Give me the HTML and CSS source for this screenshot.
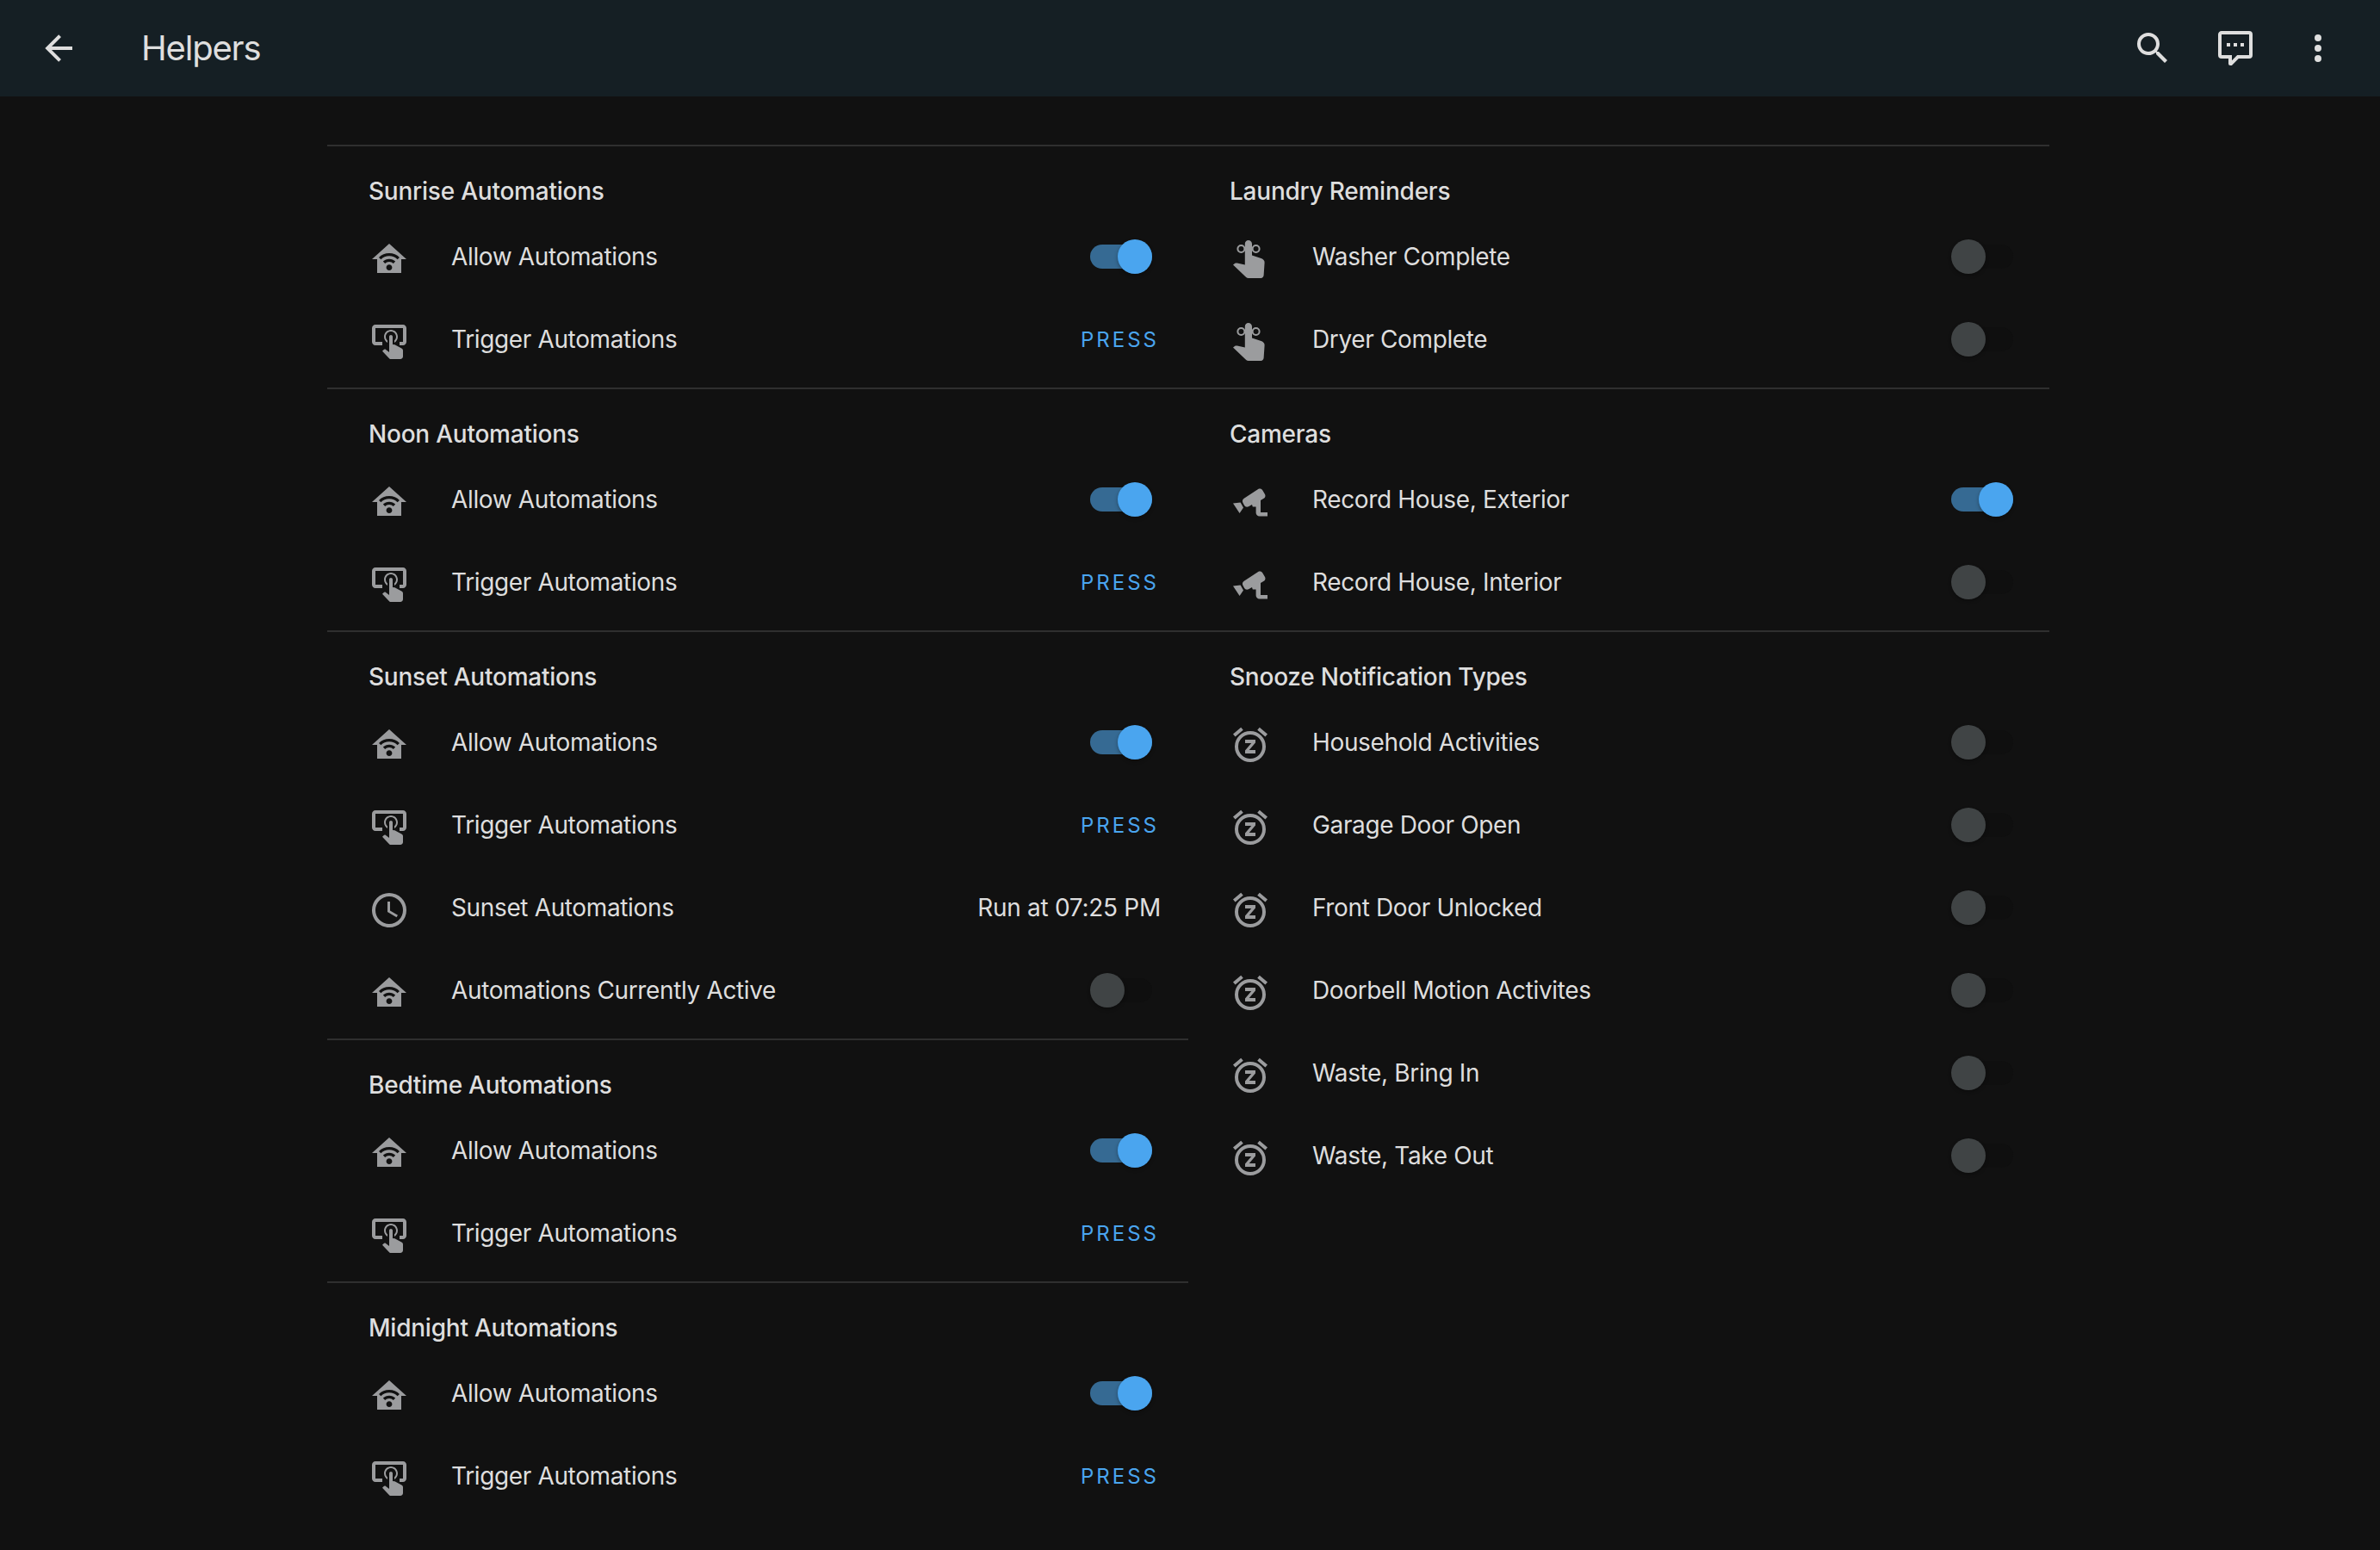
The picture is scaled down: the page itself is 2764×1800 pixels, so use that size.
FILE: index.html
```html
<!DOCTYPE html>
<html lang="en">
<head>
    <meta charset="UTF-8">
    <title>Helpers</title>
    <link rel="stylesheet" href="styles.css">
</head>
<body>
    <!-- Icon sprite -->
    <svg class="sprite" xmlns="http://www.w3.org/2000/svg">
        <symbol id="i-back" viewBox="0 0 24 24"><path d="M20,11V13H8L13.5,18.5L12.08,19.92L4.16,12L12.08,4.08L13.5,5.5L8,11H20Z"/></symbol>
        <symbol id="i-search" viewBox="0 0 24 24"><path d="M9.5,3A6.5,6.5 0 0,1 16,9.5C16,11.11 15.41,12.59 14.44,13.73L14.71,14H15.5L20.5,19L19,20.5L14,15.5V14.71L13.73,14.44C12.59,15.41 11.11,16 9.5,16A6.5,6.5 0 0,1 3,9.5A6.5,6.5 0 0,1 9.5,3M9.5,5C7,5 5,7 5,9.5C5,12 7,14 9.5,14C12,14 14,12 14,9.5C14,7 12,5 9.5,5Z"/></symbol>
        <symbol id="i-comment" viewBox="0 0 24 24"><path d="M9,22A1,1 0 0,1 8,21V18H4A2,2 0 0,1 2,16V4C2,2.89 2.9,2 4,2H20A2,2 0 0,1 22,4V16A2,2 0 0,1 20,18H13.9L10.2,21.71C10,21.9 9.75,22 9.5,22V22H9M10,16V19.08L13.08,16H20V4H4V16H10M17,11H15V9H17V11M13,11H11V9H13V11M9,11H7V9H9V11Z"/></symbol>
        <symbol id="i-dots" viewBox="0 0 24 24"><path d="M12,16A2,2 0 0,1 14,18A2,2 0 0,1 12,20A2,2 0 0,1 10,18A2,2 0 0,1 12,16M12,10A2,2 0 0,1 14,12A2,2 0 0,1 12,14A2,2 0 0,1 10,12A2,2 0 0,1 12,10M12,4A2,2 0 0,1 14,6A2,2 0 0,1 12,8A2,2 0 0,1 10,6A2,2 0 0,1 12,4Z"/></symbol>
        <symbol id="i-home" viewBox="0 0 24 24"><path fill-rule="evenodd" d="M12,3L2,12H5V20H19V12H22L12,3M12,8.5C14.34,8.5 16.46,9.43 18,10.94L16.8,12.12C15.58,10.91 13.88,10.17 12,10.17C10.12,10.17 8.42,10.91 7.2,12.12L6,10.94C7.54,9.43 9.66,8.5 12,8.5M12,11.83C13.4,11.83 14.67,12.39 15.6,13.3L14.4,14.47C13.79,13.87 12.94,13.5 12,13.5C11.06,13.5 10.21,13.87 9.6,14.47L8.4,13.3C9.33,12.39 10.6,11.83 12,11.83M12,15.17C12.94,15.17 13.7,15.91 13.7,16.83C13.7,17.75 12.94,18.5 12,18.5C11.06,18.5 10.3,17.75 10.3,16.83C10.3,15.91 11.06,15.17 12,15.17Z"/></symbol>
        <symbol id="i-tap" viewBox="0 0 24 24"><path d="M13 5C15.21 5 17 6.79 17 9C17 10.5 16.2 11.77 15 12.46V11.24C15.61 10.69 16 9.89 16 9C16 7.34 14.66 6 13 6S10 7.34 10 9C10 9.89 10.39 10.69 11 11.24V12.46C9.8 11.77 9 10.5 9 9C9 6.79 10.79 5 13 5M20 20.5C19.97 21.32 19.32 21.97 18.5 22H13C12.62 22 12.26 21.85 12 21.57L8 17.37L8.74 16.6C8.93 16.39 9.2 16.28 9.5 16.28H9.7L12 18V9C12 8.45 12.45 8 13 8S14 8.45 14 9V13.47L15.21 13.6L19.15 15.79C19.68 16.03 20 16.56 20 17.14V20.5M20 2H4C2.9 2 2 2.9 2 4V12C2 13.11 2.9 14 4 14H8V12H4V4H20V12H18V14H20C21.1 14 22 13.1 22 12V4C22 2.9 21.11 2 20 2Z"/></symbol>
        <symbol id="i-hold" viewBox="0 0 24 24"><path d="M8.9 3.1C8.9 1.9 9.8 1 10.9 1S13 1.9 13 3.1V9.8L18.3 11.5C19.5 11.9 20.4 12.8 20.3 14L19.8 21.4C19.7 22.4 19 23 18.2 23H10.9C10.4 23 10 22.8 9.6 22.5L2 15.2L3 14.5C3.4 14.2 3.9 14.2 4.4 14.3L8.9 15.2Z"/><circle cx="6.7" cy="6" r="2" fill="none" stroke="currentColor" stroke-width="1"/><circle cx="15.3" cy="6" r="2" fill="none" stroke="currentColor" stroke-width="1"/></symbol>
        <symbol id="i-cctv" viewBox="0 0 24 24"><path d="M16.6 4.5C17.5 4 18.6 4.3 19.1 5.1L20.5 7.5C21 8.4 20.7 9.4 19.9 9.9L18 11V18H22V20.2H17.3C16.2 20.2 15.3 19.3 15.3 18.2V14.8H13.4L13 13.5L11 14.6C10.1 15.1 9 14.8 8.5 13.9L7.7 12.4C7.2 11.5 7.5 10.4 8.4 9.9ZM2 12.7L6.3 12.2L8 15.2L5.8 18.5Z"/></symbol>
        <symbol id="i-snooze" viewBox="0 0 24 24"><path fill-rule="evenodd" d="M7.88,3.39L6.6,1.86L2,5.71L3.29,7.24L7.88,3.39M22,5.72L17.4,1.86L16.11,3.39L20.71,7.25L22,5.72M12,4A9,9 0 0,0 3,13A9,9 0 0,0 12,22C17,22 21,18 21,13A9,9 0 0,0 12,4M12,20A7,7 0 0,1 5,13A7,7 0 0,1 12,6A7,7 0 0,1 19,13A7,7 0 0,1 12,20M9,11H12.63L9,15.2V17H15V15H11.37L15,10.8V9H9V11Z"/></symbol>
        <symbol id="i-clock" viewBox="0 0 24 24"><path d="M12,20A8,8 0 0,0 20,12A8,8 0 0,0 12,4A8,8 0 0,0 4,12A8,8 0 0,0 12,20M12,2A10,10 0 0,1 22,12A10,10 0 0,1 12,22C6.47,22 2,17.5 2,12A10,10 0 0,1 12,2M12.5,7V12.25L17,14.92L16.25,16.16L11,13V7H12.5Z"/></symbol>
    </svg>

    <!-- Top bar -->
    <header class="topbar">
        <svg class="icon"><use href="#i-back"/></svg>
        <h1 class="title">Helpers</h1>
        <div class="actions">
            <svg class="icon"><use href="#i-search"/></svg>
            <svg class="icon"><use href="#i-comment"/></svg>
            <svg class="icon"><use href="#i-dots"/></svg>
        </div>
    </header>

    <main class="columns">
        <!-- Left column -->
        <div class="column">
            <section class="card">
                <h2>Sunrise Automations</h2>
                <div class="row"><svg class="icon"><use href="#i-home"/></svg><span class="name">Allow Automations</span><span class="toggle on"></span></div>
                <div class="row"><svg class="icon"><use href="#i-tap"/></svg><span class="name">Trigger Automations</span><span class="press">PRESS</span></div>
            </section>
            <section class="card">
                <h2>Noon Automations</h2>
                <div class="row"><svg class="icon"><use href="#i-home"/></svg><span class="name">Allow Automations</span><span class="toggle on"></span></div>
                <div class="row"><svg class="icon"><use href="#i-tap"/></svg><span class="name">Trigger Automations</span><span class="press">PRESS</span></div>
            </section>
            <section class="card">
                <h2>Sunset Automations</h2>
                <div class="row"><svg class="icon"><use href="#i-home"/></svg><span class="name">Allow Automations</span><span class="toggle on"></span></div>
                <div class="row"><svg class="icon"><use href="#i-tap"/></svg><span class="name">Trigger Automations</span><span class="press">PRESS</span></div>
                <div class="row"><svg class="icon"><use href="#i-clock"/></svg><span class="name">Sunset Automations</span><span class="value">Run at 07:25 PM</span></div>
                <div class="row"><svg class="icon"><use href="#i-home"/></svg><span class="name">Automations Currently Active</span><span class="toggle"></span></div>
            </section>
            <section class="card">
                <h2>Bedtime Automations</h2>
                <div class="row"><svg class="icon"><use href="#i-home"/></svg><span class="name">Allow Automations</span><span class="toggle on"></span></div>
                <div class="row"><svg class="icon"><use href="#i-tap"/></svg><span class="name">Trigger Automations</span><span class="press">PRESS</span></div>
            </section>
            <section class="card">
                <h2>Midnight Automations</h2>
                <div class="row"><svg class="icon"><use href="#i-home"/></svg><span class="name">Allow Automations</span><span class="toggle on"></span></div>
                <div class="row"><svg class="icon"><use href="#i-tap"/></svg><span class="name">Trigger Automations</span><span class="press">PRESS</span></div>
            </section>
        </div>

        <!-- Right column -->
        <div class="column">
            <section class="card">
                <h2>Laundry Reminders</h2>
                <div class="row"><svg class="icon"><use href="#i-hold"/></svg><span class="name">Washer Complete</span><span class="toggle"></span></div>
                <div class="row"><svg class="icon"><use href="#i-hold"/></svg><span class="name">Dryer Complete</span><span class="toggle"></span></div>
            </section>
            <section class="card">
                <h2>Cameras</h2>
                <div class="row"><svg class="icon"><use href="#i-cctv"/></svg><span class="name">Record House, Exterior</span><span class="toggle on"></span></div>
                <div class="row"><svg class="icon"><use href="#i-cctv"/></svg><span class="name">Record House, Interior</span><span class="toggle"></span></div>
            </section>
            <section class="card">
                <h2>Snooze Notification Types</h2>
                <div class="row"><svg class="icon"><use href="#i-snooze"/></svg><span class="name">Household Activities</span><span class="toggle"></span></div>
                <div class="row"><svg class="icon"><use href="#i-snooze"/></svg><span class="name">Garage Door Open</span><span class="toggle"></span></div>
                <div class="row"><svg class="icon"><use href="#i-snooze"/></svg><span class="name">Front Door Unlocked</span><span class="toggle"></span></div>
                <div class="row"><svg class="icon"><use href="#i-snooze"/></svg><span class="name">Doorbell Motion Activites</span><span class="toggle"></span></div>
                <div class="row"><svg class="icon"><use href="#i-snooze"/></svg><span class="name">Waste, Bring In</span><span class="toggle"></span></div>
                <div class="row"><svg class="icon"><use href="#i-snooze"/></svg><span class="name">Waste, Take Out</span><span class="toggle"></span></div>
            </section>
        </div>
    </main>
</body>
</html>
```

FILE: styles.css
```css
html, body {
    height: 100%;
}
body {
    margin: 0;
    font-family: Inter, "Liberation Sans", sans-serif;
    background-color: #111111;
    color: #dedede;
    overflow: hidden;
}
.sprite {
    display: none;
}
.icon {
    width: 48px;
    height: 48px;
    flex: none;
    fill: currentColor;
}
.topbar {
    display: flex;
    align-items: center;
    height: 112px;
    padding: 0 48px 0 44px;
    background-color: #151f24;
}
.title {
    margin: 0 0 0 72px;
    font-size: 40px;
    font-weight: 400;
    line-height: 48px;
    letter-spacing: -1.2px;
}
.actions {
    display: flex;
    gap: 48px;
    margin-left: auto;
}
.columns {
    display: grid;
    grid-template-columns: 1000px 1000px;
    margin: 56px 0 0 380px;
}
.card {
    border-top: 2px solid #2f2f2f;
    padding-bottom: 8px;
}
.card h2 {
    margin: 0;
    padding: 32px 0 8px 48px;
    font-size: 28px;
    font-weight: 500;
    line-height: 40px;
    letter-spacing: -0.23px;
}
.row {
    display: flex;
    align-items: center;
    height: 96px;
    padding: 0 32px 0 48px;
    font-size: 28px;
    letter-spacing: -0.36px;
}
/* icons sit a little under the text line */
.row .icon {
    margin-top: 6px;
    color: #9b9c9e;
}
.name {
    flex: 1;
    margin-left: 48px;
}
.value {
    letter-spacing: -0.28px;
}
.press {
    margin-right: 2px;
    color: #4aa5ef;
    font-size: 24px;
    font-weight: 400;
    letter-spacing: 3px;
}
.toggle {
    position: relative;
    width: 72px;
    height: 28px;
    margin-right: 10px;
    border-radius: 14px;
    background-color: #0f0f0f;
}
.toggle::after {
    content: "";
    position: absolute;
    top: -6px;
    left: 0;
    width: 40px;
    height: 40px;
    border-radius: 50%;
    background-color: #404445;
    box-shadow: 0 2px 4px rgba(0, 0, 0, 0.3);
}
.toggle.on {
    background-color: #366a93;
}
.toggle.on::after {
    left: 32px;
    background-color: #4aa5ef;
}
```
